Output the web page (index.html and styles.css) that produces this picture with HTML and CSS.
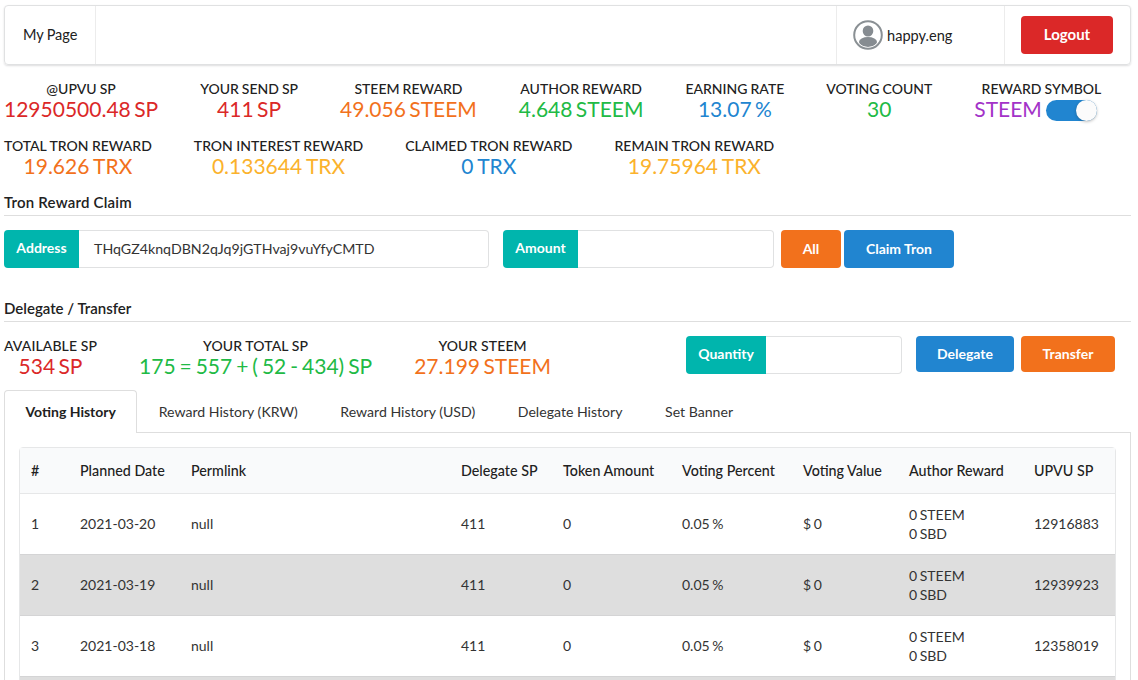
FILE: index.html
```html
<!DOCTYPE html>
<html lang="en">
<head>
<meta charset="utf-8">
<title>My Page</title>
<link rel="stylesheet" href="styles.css">
</head>
<body>
<nav class="navbar">
  <a class="nav-item nav-title">My Page</a>
  <div class="nav-spacer"></div>
  <div class="nav-item nav-user">
    <svg class="avatar" viewBox="0 0 30 30" aria-hidden="true">
      <defs><clipPath id="avatar-clip"><circle cx="15" cy="15" r="12"/></clipPath></defs>
      <circle cx="15" cy="15" r="13.8" fill="#fff" stroke="#8a9094" stroke-width="2"/>
      <g clip-path="url(#avatar-clip)" fill="#868c91">
        <ellipse cx="15" cy="11" rx="5.3" ry="5.6"/>
        <ellipse cx="15" cy="22" rx="9" ry="5"/>
      </g>
    </svg>
    <span>happy.eng</span>
  </div>
  <div class="nav-item nav-logout"><button class="btn btn-red btn-logout">Logout</button></div>
</nav>

<section class="stats stats-first">
  <div class="stat"><div class="stat-label">@UPVU SP</div><div class="stat-value red">12950500.48 SP</div></div>
  <div class="stat"><div class="stat-label">YOUR SEND SP</div><div class="stat-value red">411 SP</div></div>
  <div class="stat"><div class="stat-label">STEEM REWARD</div><div class="stat-value orange">49.056 STEEM</div></div>
  <div class="stat"><div class="stat-label">AUTHOR REWARD</div><div class="stat-value green">4.648 STEEM</div></div>
  <div class="stat"><div class="stat-label">EARNING RATE</div><div class="stat-value blue">13.07 %</div></div>
  <div class="stat"><div class="stat-label">VOTING COUNT</div><div class="stat-value green">30</div></div>
  <div class="stat stat-symbol">
    <div class="stat-label">REWARD SYMBOL</div>
    <div class="stat-value purple symbol">STEEM<span class="toggle"><span class="knob"></span></span></div>
  </div>
</section>

<section class="stats stats-second">
  <div class="stat"><div class="stat-label">TOTAL TRON REWARD</div><div class="stat-value orange">19.626 TRX</div></div>
  <div class="stat"><div class="stat-label">TRON INTEREST REWARD</div><div class="stat-value yellow">0.133644 TRX</div></div>
  <div class="stat"><div class="stat-label">CLAIMED TRON REWARD</div><div class="stat-value blue">0 TRX</div></div>
  <div class="stat"><div class="stat-label">REMAIN TRON REWARD</div><div class="stat-value yellow">19.75964 TRX</div></div>
</section>

<h2 class="section-title section-tron">Tron Reward Claim</h2>
<div class="form-row">
  <div class="input-group group-address">
    <label class="input-label">Address</label>
    <div class="input-box">THqGZ4knqDBN2qJq9jGTHvaj9vuYfyCMTD</div>
  </div>
  <div class="input-group group-amount">
    <label class="input-label">Amount</label>
    <div class="input-box"></div>
  </div>
  <button class="btn btn-orange btn-all">All</button>
  <button class="btn btn-blue btn-claim">Claim Tron</button>
</div>

<h2 class="section-title section-delegate">Delegate / Transfer</h2>
<div class="delegate-row">
  <div class="stat"><div class="stat-label">AVAILABLE SP</div><div class="stat-value red">534 SP</div></div>
  <div class="stat"><div class="stat-label">YOUR TOTAL SP</div><div class="stat-value green formula">175 = 557 + ( 52 - 434) SP</div></div>
  <div class="stat"><div class="stat-label">YOUR STEEM</div><div class="stat-value orange">27.199 STEEM</div></div>
  <div class="input-group group-quantity">
    <label class="input-label">Quantity</label>
    <div class="input-box"></div>
  </div>
  <div class="delegate-actions">
    <button class="btn btn-blue btn-delegate">Delegate</button>
    <button class="btn btn-orange btn-transfer">Transfer</button>
  </div>
</div>

<div class="tabs">
  <a class="tab active">Voting History</a>
  <a class="tab">Reward History (KRW)</a>
  <a class="tab">Reward History (USD)</a>
  <a class="tab">Delegate History</a>
  <a class="tab">Set Banner</a>
</div>
<div class="tab-panel">
  <table class="history">
    <colgroup>
      <col class="c-num"><col class="c-date"><col class="c-link"><col class="c-sp"><col class="c-token"><col class="c-percent"><col class="c-value"><col class="c-author"><col class="c-upvu">
    </colgroup>
    <thead>
      <tr><th>#</th><th>Planned Date</th><th>Permlink</th><th>Delegate SP</th><th>Token Amount</th><th>Voting Percent</th><th>Voting Value</th><th>Author Reward</th><th>UPVU SP</th></tr>
    </thead>
    <tbody>
      <tr><td>1</td><td>2021-03-20</td><td>null</td><td>411</td><td>0</td><td>0.05 %</td><td>$ 0</td><td class="author">0 STEEM<br>0 SBD</td><td>12916883</td></tr>
      <tr class="alt"><td>2</td><td>2021-03-19</td><td>null</td><td>411</td><td>0</td><td>0.05 %</td><td>$ 0</td><td class="author">0 STEEM<br>0 SBD</td><td>12939923</td></tr>
      <tr><td>3</td><td>2021-03-18</td><td>null</td><td>411</td><td>0</td><td>0.05 %</td><td>$ 0</td><td class="author">0 STEEM<br>0 SBD</td><td>12358019</td></tr>
      <tr class="alt"><td colspan="9"></td></tr>
    </tbody>
  </table>
</div>
</body>
</html>
```

FILE: styles.css
```css
* { box-sizing: border-box; }
html, body { height: 680px; overflow: hidden; }
body {
  margin: 0;
  padding: 5px 7px 0 4px;
  background: #fff;
  color: #212121;
  font-family: Lato, "Open Sans", sans-serif;
  font-size: 14px;
  line-height: 19px;
}

/* navbar */
.navbar {
  display: flex;
  height: 60px;
  border: 1px solid #e0e1e2;
  border-radius: 4px;
  box-shadow: 0 1px 2px rgba(34, 36, 38, .15);
}
.nav-item { display: flex; align-items: center; padding-bottom: 2px; }
.nav-title { width: 91px; padding-left: 18px; border-right: 1px solid #ececec; font-size: 14.5px; word-spacing: -.5px; }
.nav-spacer { flex: 1; }
.nav-user { width: 169px; padding-left: 16px; padding-bottom: 0; gap: 4px; border-left: 1px solid #ececec; border-right: 1px solid #ececec; font-size: 14.6px; }
.avatar { width: 30px; height: 30px; flex: none; }
.nav-logout { width: 125px; padding-left: 16px; padding-bottom: 0; }

/* buttons */
.btn {
  border: 0;
  border-radius: 4px;
  color: #fff;
  font: 700 14px/19px Lato, sans-serif;
  padding: 0 0 1px;
}
.btn-red { background: #db2828; }
.btn-orange { background: #f2711c; }
.btn-blue { background: #2185d0; }
.btn-logout { width: 92px; height: 38px; font-size: 15px; padding-bottom: 2px; }
.btn-all { width: 60px; height: 38px; }
.btn-claim { width: 110px; height: 38px; margin-left: 3px; }
.btn-delegate { width: 98px; height: 36px; }
.btn-transfer { width: 94px; height: 36px; }

/* stats */
.stats { display: flex; gap: 42px; }
.stats-first { margin-top: 15px; }
.stats-second { margin-top: 16px; }
.stat { text-align: center; }
.stat-label { font-size: 14px; line-height: 17px; font-weight: 500; white-space: nowrap; word-spacing: -.5px; }
.stat-value { font-size: 21px; line-height: 24px; white-space: nowrap; word-spacing: -2px; }
.stats-second .stat-label { word-spacing: 0; }
.stats-second .stat-value { word-spacing: -1px; }
.delegate-row .stat-label { word-spacing: 0; letter-spacing: .1px; }
.formula { word-spacing: -1.4px; }
.red { color: #db2828; }
.orange { color: #f2711c; }
.green { color: #21ba45; }
.blue { color: #2185d0; }
.purple { color: #a333c8; }
.yellow { color: #fbb22c; }
.stat-symbol { width: 127px; }
.stat-symbol .stat-label { text-align: right; }
.symbol { display: flex; align-items: center; justify-content: flex-start; height: 24px; }
.toggle {
  position: relative;
  display: block;
  width: 51px;
  height: 21px;
  margin: 3px 0 0 4px;
  border-radius: 11px;
  background: #2185d0;
}
.knob {
  position: absolute;
  top: 0;
  right: 0;
  width: 21px;
  height: 21px;
  border-radius: 50%;
  background: #fbfbfb;
  box-shadow: 0 1px 3px rgba(34, 36, 38, .3);
}

/* sections */
.section-title {
  margin: 14px 0 0;
  padding-bottom: 3px;
  border-bottom: 1px solid #dedede;
  font-size: 15px;
  line-height: 20px;
  font-weight: 600;
}
.section-tron { letter-spacing: .2px; }
.section-delegate { margin-top: 30px; }

/* inputs */
.form-row { display: flex; margin-top: 14px; }
.input-group { display: flex; height: 38px; }
.input-label {
  display: flex;
  align-items: center;
  justify-content: center;
  background: #00b5ad;
  border-radius: 4px 0 0 4px;
  color: #fff;
  font-weight: 700;
  padding-bottom: 3px;
}
.input-box {
  flex: 1;
  display: flex;
  align-items: center;
  padding: 0 0 1px 15px;
  border: 1px solid #e0e1e2;
  border-left: 0;
  border-radius: 0 4px 4px 0;
  color: #333;
  font-size: 14.2px;
}
.group-address { width: 485px; }
.group-address .input-label { width: 75px; }
.group-amount { width: 271px; margin-left: 14px; margin-right: 7px; }
.group-amount .input-label { width: 75px; }
.group-quantity { width: 216px; margin-left: 93px; }
.group-quantity .input-label { width: 80px; }

.delegate-row { display: flex; gap: 42px; margin-top: 14px; align-items: flex-start; }
.delegate-row .stat { padding-top: 1px; }
.delegate-actions { display: flex; gap: 7px; margin-left: -28px; }

/* tabs */
.tabs { display: flex; margin-top: 12px; height: 43px; position: relative; z-index: 1; }
.tab { display: flex; align-items: center; padding: 0 21.3px 1px; color: #333; font-size: 14.1px; }
.tab.active {
  font-weight: 700;
  font-size: 14px;
  color: #212121;
  background: #fff;
  border: 1px solid #dedede;
  border-bottom: 0;
  border-radius: 4px 4px 0 0;
  padding: 0 20.5px 1px;
}
.tab-panel {
  margin-top: -1px;
  padding: 14px 14px 0;
  border: 1px solid #dedede;
  border-bottom: 0;
  height: 300px;
}

/* table */
.history {
  width: 1097px;
  table-layout: fixed;
  border-collapse: separate;
  border-spacing: 0;
  border: 1px solid #e6e7e8;
  border-radius: 4px;
  color: #333;
}
.c-num { width: 49px; }
.c-date { width: 111px; }
.c-link { width: 270px; }
.c-sp { width: 102px; }
.c-token { width: 119px; }
.c-percent { width: 121px; }
.c-value { width: 106px; }
.c-author { width: 125px; }
.c-upvu { width: 92px; }
.history th, .history td { padding: 0 0 0 11px; text-align: left; }
.history th {
  height: 46px;
  background: #f9fafb;
  border-bottom: 1px solid #e6e7e8;
  font-weight: 500;
  font-size: 14.3px;
  color: #212121;
}
.history td { height: 61px; padding-bottom: 2px; border-bottom: 1px solid #d4d4d5; word-spacing: -1px; }
.history td.author { padding-bottom: 0; }
.alt td { background: #dedede; }
```
